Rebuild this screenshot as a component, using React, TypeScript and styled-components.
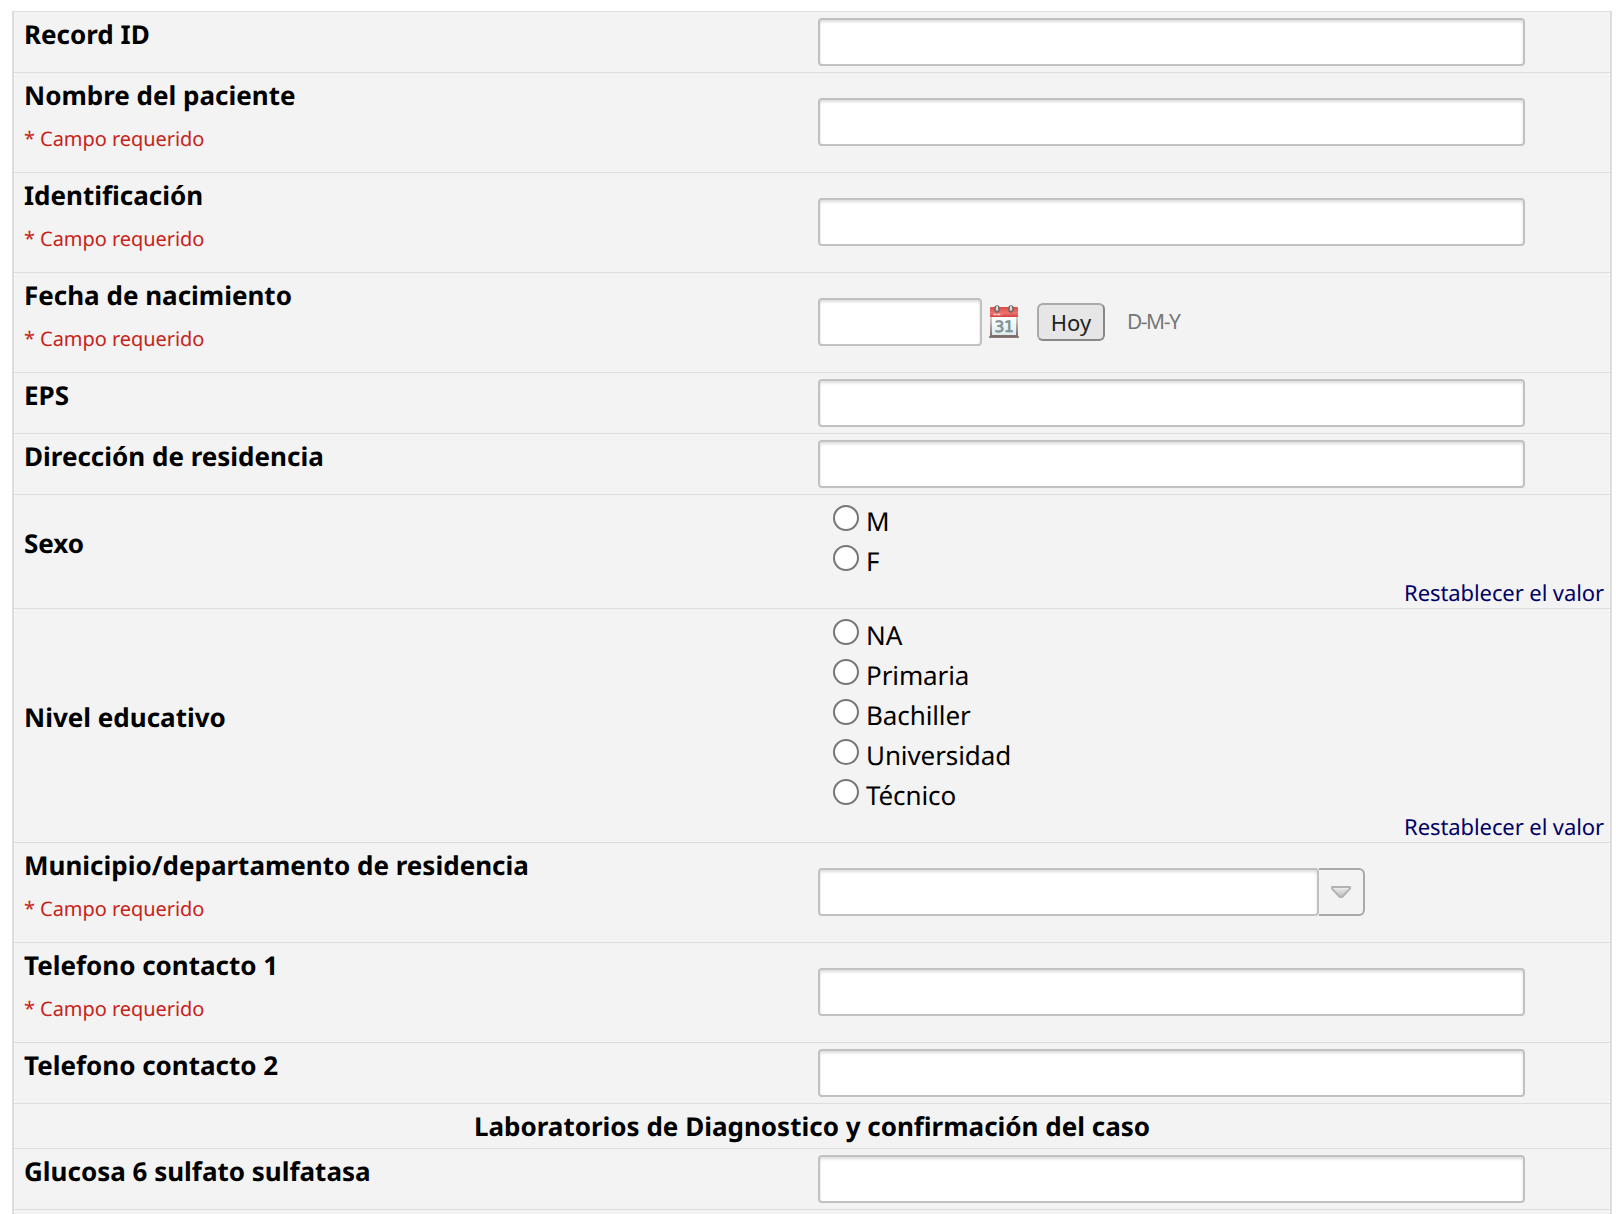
import React from "react";
import styled, { createGlobalStyle } from "styled-components";

const GlobalStyle = createGlobalStyle`
  *, *::before, *::after { box-sizing: border-box; }
  html, body { margin: 0; padding: 0; }
  body {
    height: 1214px;
    overflow: hidden;
    background: #fff;
    color: #000;
    font-family: "Noto Sans", "Open Sans", sans-serif;
    font-size: 26px;
    text-rendering: geometricPrecision;
  }
`;

const Form = styled.form`
  width: 1600px;
  height: 1220px;
  margin: 11px 0 0 12px;
  background: #f3f3f3;
  border: 2px solid #ddd;
  border-width: 1px 2px;
`;

const Row = styled.div<{ $height: number }>`
  display: grid;
  grid-template-columns: 798px 1fr;
  height: ${(p) => p.$height}px;
  border-bottom: 1px solid #ddd;
`;

const LabelCell = styled.div<{ $middle?: boolean }>`
  display: flex;
  flex-direction: column;
  justify-content: ${(p) => (p.$middle ? "center" : "flex-start")};
  padding: ${(p) => (p.$middle ? "0 10px 17px" : "4px 10px 0")};
`;

const Label = styled.label`
  font-size: 26px;
  line-height: 36px;
  font-weight: 700;
  white-space: nowrap;
`;

const Required = styled.div`
  margin-top: 12px;
  color: #c7241a;
  font-size: 20px;
  line-height: 28px;
  letter-spacing: -0.06px;
`;

const FieldCell = styled.div<{ $tall?: boolean }>`
  display: flex;
  align-items: flex-start;
  padding: ${(p) => (p.$tall ? 25 : 6)}px 0 0 6px;
`;

const TextInput = styled.input<{ $width: number }>`
  width: ${(p) => p.$width}px;
  height: 48px;
  padding: 0 8px;
  border: 2px solid #c1c1c1;
  border-radius: 4px;
  background: #fff;
  box-shadow: inset 0 2px 3px #ddd;
  font: 26px "Noto Sans", sans-serif;
  outline: none;
`;

const CalendarIcon = styled.svg`
  width: 32px;
  height: 34px;
  margin: 7px 0 0 6px;
`;

const TodayButton = styled.button`
  width: 68px;
  height: 38px;
  margin: 5px 0 0 17px;
  padding: 0;
  border: 2px solid;
  border-color: #aaa #888 #888 #aaa;
  border-radius: 6px;
  background: #e6e6e6;
  color: #222;
  font: 22px/34px "Noto Sans", sans-serif;
`;

const DateHint = styled.span`
  margin: 9px 0 0 22px;
  color: #777;
  font-size: 21px;
  line-height: 30px;
  letter-spacing: -1.5px;
`;

const ComboButton = styled.button`
  display: flex;
  align-items: center;
  justify-content: center;
  width: 46px;
  height: 48px;
  padding: 0;
  border: 2px solid #aaa;
  border-left: 0;
  border-radius: 0 6px 6px 0;
  background: #f3f3f3;
`;

const ChoiceCell = styled.div`
  display: flex;
  flex-direction: column;
  padding: 7px 6px 0 20px;
`;

const Choice = styled.label`
  display: flex;
  align-items: flex-start;
  height: 40px;
  line-height: 36px;
`;

const Radio = styled.input`
  appearance: none;
  flex: none;
  width: 26px;
  height: 26px;
  margin: 3px 7px 0 1px;
  border: 2px solid #767676;
  border-radius: 50%;
  background: #fff;
`;

const ChoiceText = styled.span`
  padding-top: 1px;
  letter-spacing: -0.1px;
`;

const ResetLink = styled.a`
  align-self: flex-end;
  margin-top: -4px;
  color: #000066;
  font-size: 22px;
  line-height: 30px;
  letter-spacing: -0.09px;
`;

const SectionHeader = styled.div`
  height: 45px;
  padding-top: 4px;
  border-bottom: 1px solid #ddd;
  font-weight: 700;
  line-height: 36px;
  text-align: center;
`;

interface FieldProps {
  label: string;
  required?: boolean;
  children?: React.ReactNode;
}

function Field({ label, required, children }: FieldProps) {
  return (
    <Row $height={required ? 100 : 61}>
      <LabelCell>
        <Label>{label}</Label>
        {required && <Required>* Campo requerido</Required>}
      </LabelCell>
      <FieldCell $tall={required}>
        {children ?? <TextInput type="text" $width={707} />}
      </FieldCell>
    </Row>
  );
}

function ChoiceField({ label, name, options }: { label: string; name: string; options: string[] }) {
  return (
    <Row $height={34 + options.length * 40}>
      <LabelCell $middle>
        <Label>{label}</Label>
      </LabelCell>
      <ChoiceCell>
        {options.map((option) => (
          <Choice key={option}>
            <Radio type="radio" name={name} />
            <ChoiceText>{option}</ChoiceText>
          </Choice>
        ))}
        <ResetLink>Restablecer el valor</ResetLink>
      </ChoiceCell>
    </Row>
  );
}

function Calendar() {
  return (
    <CalendarIcon viewBox="0 0 32 34">
      <defs>
        <linearGradient id="calRed" x1="0" y1="0" x2="0" y2="1">
          <stop offset="0" stopColor="#d94c4a" />
          <stop offset="0.6" stopColor="#ee7470" />
          <stop offset="1" stopColor="#d5413f" />
        </linearGradient>
        <linearGradient id="calPage" x1="0" y1="0" x2="0" y2="1">
          <stop offset="0" stopColor="#fff" />
          <stop offset="1" stopColor="#dcebed" />
        </linearGradient>
        <linearGradient id="calEdge" x1="0" y1="0" x2="0" y2="1">
          <stop offset="0" stopColor="#d8d3d3" />
          <stop offset="1" stopColor="#786563" />
        </linearGradient>
      </defs>
      <path d="M1 32h30" stroke="#806f6d" strokeWidth="2" opacity=".75" />
      <path d="M2 12h28v20.500H2z" fill="url(#calEdge)" />
      <path d="M4 12h24v18H4z" fill="url(#calPage)" />
      <path d="M3 2h26q1 0 1 1v9H2V3q0-1 1-1z" fill="url(#calRed)" />
      <path d="M5.500 9.500h8" stroke="#fff" strokeWidth="1.3" strokeDasharray="3 .7" opacity=".75" />
      <g fill="#b9a4a2" stroke="#756565" strokeWidth="1.4">
        <rect x="7" y="1" width="4" height="6" rx="2" />
        <rect x="21" y="1" width="4" height="6" rx="2" />
      </g>
      <g stroke="#eee" strokeWidth="1.4">
        <path d="M9 1v4M23 1v4" />
      </g>
      <text
        x="16"
        y="26.5"
        textAnchor="middle"
        fontFamily="DejaVu Sans, sans-serif"
        fontSize="15.5"
        letterSpacing="-.3"
        fill="#849091"
        stroke="#849091"
        strokeWidth=".7"
      >
        31
      </text>
    </CalendarIcon>
  );
}

function DownTriangle() {
  return (
    <svg width="22" height="14" viewBox="0 0 22 14">
      <defs>
        <linearGradient id="arrowFill" x1="0" y1="0" x2="0" y2="1">
          <stop offset="0" stopColor="#f0f0f0" />
          <stop offset="1" stopColor="#bbb" />
        </linearGradient>
      </defs>
      <path d="M2 2h18v1.6L12.2 12h-2.4L2 3.600z" fill="url(#arrowFill)" stroke="#b3b3b3" strokeWidth="2" strokeLinejoin="round" />
    </svg>
  );
}

export default function App() {
  return (
    <>
      <GlobalStyle />
      <Form>
        <Field label="Record ID" />
        <Field label="Nombre del paciente" required />
        <Field label="Identificación" required />
        <Field label="Fecha de nacimiento" required>
          <TextInput type="text" $width={164} />
          <Calendar />
          <TodayButton type="button">Hoy</TodayButton>
          <DateHint>D-M-Y</DateHint>
        </Field>
        <Field label="EPS" />
        <Field label="Dirección de residencia" />
        <ChoiceField label="Sexo" name="sexo" options={["M", "F"]} />
        <ChoiceField
          label="Nivel educativo"
          name="nivel"
          options={["NA", "Primaria", "Bachiller", "Universidad", "Técnico"]}
        />
        <Field label="Municipio/departamento de residencia" required>
          <TextInput type="text" $width={501} />
          <ComboButton type="button">
            <DownTriangle />
          </ComboButton>
        </Field>
        <Field label="Telefono contacto 1" required />
        <Field label="Telefono contacto 2" />
        <SectionHeader>Laboratorios de Diagnostico y confirmación del caso</SectionHeader>
        <Field label="Glucosa 6 sulfato sulfatasa" />
      </Form>
    </>
  );
}
